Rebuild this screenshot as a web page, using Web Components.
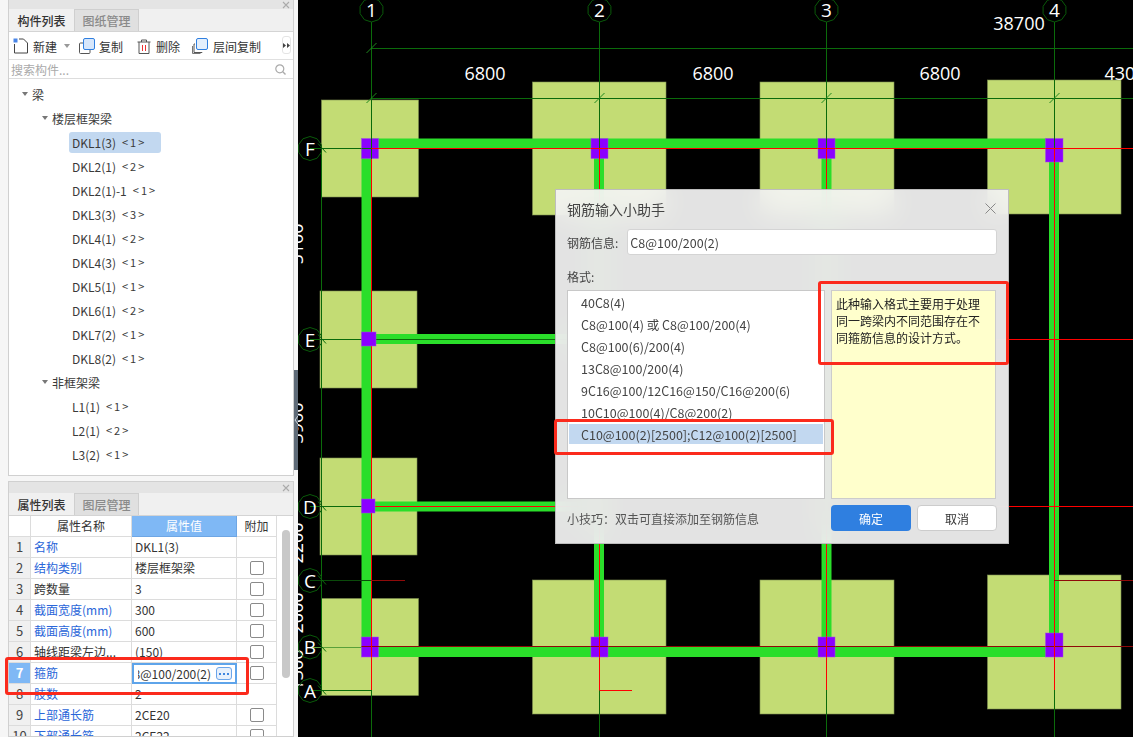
<!DOCTYPE html>
<html>
<head>
<meta charset="utf-8">
<style>
html, body { margin: 0; height: 737px; overflow: hidden; background: #000; }
body {
  display: flex;
  font: 12px "Noto Sans CJK SC", "Liberation Sans", sans-serif;
  color: #333;
}
</style>
</head>
<body>
<side-bar>
  <dock-panel style="height:476px" tab1="构件列表" tab2="图纸管理">
    <tool-bar></tool-bar>
    <search-box></search-box>
    <tree-view></tree-view>
  </dock-panel>
  <dock-panel style="height:256px" tab1="属性列表" tab2="图层管理" low>
    <prop-table></prop-table>
  </dock-panel>
  <mark-box style="left:5px;top:657px;width:244px;height:38px"></mark-box>
</side-bar>
<cad-view>
  <rebar-dialog></rebar-dialog>
</cad-view>

<script>
class MarkBox extends HTMLElement {
  constructor() {
    super();
    this.attachShadow({ mode: 'open' }).innerHTML = `<style>
      :host { display: block; position: absolute; box-sizing: border-box; border: 3px solid #fb2a1c; border-radius: 3px; pointer-events: none; }
    </style>`;
  }
}

class SideBar extends HTMLElement {
  constructor() {
    super();
    this.attachShadow({ mode: 'open' }).innerHTML = `<style>
      :host { display: flex; flex-direction: column; gap: 5px; position: relative; box-sizing: border-box; width: 298px; height: 737px; flex: none;
        padding: 0 4px 0 8px; background: #f6f6f6; }
      .bar { position: absolute; right: 0; top: 370px; width: 4px; height: 100px; background: #5f6b78; display: flex; align-items: center; }
    </style><slot></slot><div class="bar"><svg width="4" height="8" viewBox="0 0 4 8"><path d="M4 0L1 4l3 4" fill="none" stroke="#cfd5db"/></svg></div>`;
  }
}

class DockPanel extends HTMLElement {
  constructor() {
    super();
    const low = this.hasAttribute('low');
    this.attachShadow({ mode: 'open' }).innerHTML = `<style>
      :host { display: flex; flex-direction: column; box-sizing: border-box; flex: none; border: solid #d0d0d0; border-width: 0 1px 1px; background: #fff; overflow: hidden; }
      .head { box-sizing: border-box; height: ${low ? 12 : 9}px; background: #e4e4e4; display: flex; justify-content: flex-end; align-items: center; padding-right: 3px; flex: none; ${low ? 'border-top: 1px solid #d0d0d0;' : ''} }
      .tabs { box-sizing: border-box; height: 23px; background: #f0f0f0; display: flex; flex: none; border-bottom: 1px solid #d4d4d4; }
      .tab { box-sizing: border-box; width: 65px; display: flex; align-items: center; justify-content: center; font-weight: 500; color: #333; }
      .tab.off { background: #e0e0e0; color: #8a8a8a; border: 1px solid #cfcfcf; border-bottom: 0; }
      svg { display: block; }
    </style>
    <div class="head"><svg width="8" height="8" viewBox="0 0 8 8"><path d="M1 1l6 6M7 1L1 7" stroke="#aaa" stroke-width="1.1"/></svg></div>
    <div class="tabs"><div class="tab">${this.getAttribute('tab1')}</div><div class="tab off">${this.getAttribute('tab2')}</div></div>
    <slot></slot>`;
  }
}

class ToolBar extends HTMLElement {
  constructor() {
    super();
    this.attachShadow({ mode: 'open' }).innerHTML = `<style>
      :host { display: flex; align-items: center; box-sizing: border-box; height: 28px; flex: none; border-bottom: 1px solid #e0e0e0; padding: 1px 0 0 4px; position: relative; }
      .t { white-space: nowrap; color: #333; }
      svg { display: block; flex: none; }
      .more { position: absolute; right: 2px; top: 4px; width: 9px; height: 18px; border: 1px solid #e4e4e4; border-radius: 3px; display: flex; align-items: center; justify-content: center; box-sizing: border-box; }
    </style>
    <svg width="16" height="16" viewBox="0 0 16 16" style="margin-right:4px"><rect x="0.5" y="0.5" width="4" height="4" fill="#4a86e8"/><path d="M1.5 6v9h13V5l-4-4H6" fill="none" stroke="#444"/></svg>
    <span class="t">新建</span>
    <svg width="6" height="4" viewBox="0 0 6 4" style="margin:0 9px 0 7px"><path d="M0 0h6L3 4z" fill="#999"/></svg>
    <svg width="16" height="16" viewBox="0 0 16 16" style="margin-right:4px"><path d="M4 5H1.5a1 1 0 0 0-1 1v8.5a1 1 0 0 0 1 1H10a1 1 0 0 0 1-1V12" fill="none" stroke="#555"/><rect x="4.5" y="0.5" width="11" height="11" rx="1.5" fill="#d6e6fb" stroke="#2f7fe0"/></svg>
    <span class="t">复制</span>
    <svg width="14" height="15" viewBox="0 0 14 15" style="margin:0 5px 0 14px"><path d="M.5 3h13M4.5 3V1h5v2M2 3v11.500h10V3" fill="none" stroke="#555"/><path d="M5.5 6v6M8.5 6v6" stroke="#e33"/></svg>
    <span class="t">删除</span>
    <svg width="16" height="16" viewBox="0 0 16 16" style="margin:0 5px 0 12px"><path d="M3 6H2v8.5h8V14" fill="none" stroke="#555"/><path d="M.5 8v7.5h8" fill="none" stroke="#777"/><rect x="4.5" y="0.5" width="11" height="11" rx="1.5" fill="#e4effc" stroke="#2f7fe0"/></svg>
    <span class="t">层间复制</span>
    <div class="more"><svg width="7" height="5" viewBox="0 0 7 5"><path d="M0 0l3 2.5L0 5zM4 0l3 2.5L4 5z" fill="#444"/></svg></div>`;
  }
}

class SearchBox extends HTMLElement {
  constructor() {
    super();
    this.attachShadow({ mode: 'open' }).innerHTML = `<style>
      :host { display: flex; align-items: center; justify-content: space-between; box-sizing: border-box; height: 19px; flex: none; padding: 0 7px 0 2px; border-bottom: 1px solid #ddd; color: #aaa; }
    </style>
    <span>搜索构件...</span>
    <svg width="11" height="11" viewBox="0 0 11 11"><circle cx="4.8" cy="4.8" r="4" fill="none" stroke="#aaa" stroke-width="1.2"/><path d="M7.8 7.8L10.500 10.500" stroke="#aaa" stroke-width="1.4"/></svg>`;
  }
}

class TreeNode extends HTMLElement {
  constructor() {
    super();
    const level = Number(this.getAttribute('level'));
    const pads = [13, 33, 60];
    const open = this.hasAttribute('open');
    const sel = this.hasAttribute('selected');
    this.attachShadow({ mode: 'open' }).innerHTML = `<style>
      :host { display: flex; align-items: center; height: 24px; padding-left: ${pads[level]}px; box-sizing: border-box; color: #3a3a3a; white-space: nowrap; }
      .tri { width: 6px; height: 4px; margin-right: 4px; flex: none; }
      .box { display: flex; align-items: center; height: 21px; padding: 0 ${open ? 0 : sel ? 15 : 3}px 0 ${open ? 0 : 3}px; border-radius: 3px; ${sel ? 'background:#c2d8f0;' : ''} }
      .lab { margin-left: 6px; font-size: 11px; letter-spacing: 2px; }
    </style>
    ${open ? '<svg class="tri" viewBox="0 0 6 4"><path d="M0 0h6L3 4z" fill="#777"/></svg>' : ''}
    <div class="box"><slot></slot>${this.hasAttribute('tag') ? `<span class="lab">&lt;${this.getAttribute('tag')}&gt;</span>` : ''}</div>`;
  }
}

class TreeView extends HTMLElement {
  constructor() {
    super();
    const row = (l, t, tag, extra = '') => `<tree-node level="${l}" ${tag ? `tag="${tag}"` : ''} ${extra}>${t}</tree-node>`;
    this.attachShadow({ mode: 'open' }).innerHTML = `<style>
      :host { display: block; flex: 1; padding-top: 3px; overflow: hidden; }
    </style>
    ${row(0, '梁', '', 'open')}
    ${row(1, '楼层框架梁', '', 'open')}
    ${row(2, 'DKL1(3)', '1', 'selected')}
    ${row(2, 'DKL2(1)', '2')}
    ${row(2, 'DKL2(1)-1', '1')}
    ${row(2, 'DKL3(3)', '3')}
    ${row(2, 'DKL4(1)', '2')}
    ${row(2, 'DKL4(3)', '1')}
    ${row(2, 'DKL5(1)', '1')}
    ${row(2, 'DKL6(1)', '2')}
    ${row(2, 'DKL7(2)', '1')}
    ${row(2, 'DKL8(2)', '1')}
    ${row(1, '非框架梁', '', 'open')}
    ${row(2, 'L1(1)', '1')}
    ${row(2, 'L2(1)', '2')}
    ${row(2, 'L3(2)', '1')}`;
  }
}

class PropTable extends HTMLElement {
  constructor() {
    super();
    const rows = [
      ['名称', 'DKL1(3)', 1, 0],
      ['结构类别', '楼层框架梁', 1, 1],
      ['跨数量', '3', 0, 1],
      ['截面宽度(mm)', '300', 1, 1],
      ['截面高度(mm)', '600', 1, 1],
      ['轴线距梁左边...', '(150)', 0, 1],
      ['箍筋', 'C8@100/200(2)', 1, 1],
      ['肢数', '2', 1, 0],
      ['上部通长筋', '2CE20', 1, 1],
      ['下部通长筋', '2CE22', 1, 1],
    ];
    const cells = rows.map((r, i) => {
      const on = i === 6;
      const val = on
        ? `<div class="c v edit"><span class="clip"><span>${r[1]}</span></span><span class="dots"><svg width="10" height="2" viewBox="0 0 10 2"><path d="M0 0h2v2H0zM4 0h2v2H4zM8 0h2v2H8z" fill="#3d86e0"/></svg></span></div>`
        : `<div class="c v">${r[1]}</div>`;
      return `<div class="c n ${on ? 'on' : ''}">${i + 1}</div>
        <div class="c k ${r[2] ? 'blue' : ''}">${r[0]}</div>
        ${val}
        <div class="c a">${r[3] ? '<i class="chk"></i>' : ''}</div>`;
    }).join('');
    this.attachShadow({ mode: 'open' }).innerHTML = `<style>
      :host { display: block; flex: 1; position: relative; overflow: hidden; }
      .g { display: grid; grid-template-columns: 22px 101px 105px 40px; grid-auto-rows: 21px; width: 268px; }
      .c { box-sizing: border-box; border: solid #dcdcdc; border-width: 0 1px 1px 0; display: flex; align-items: center; padding: 0 0 1px 3px; white-space: nowrap; overflow: hidden; }
      .h { justify-content: center; padding: 0 0 1px; }
      .h.hv { background: #7fb8f5; color: #fff; border-color: #6ea6e4; }
      .n { background: #f0f0f0; justify-content: center; padding: 0 0 1px; font-size: 13px; color: #444; }
      .n.on { background: #7fb8f5; color: #fff; font-weight: 700; }
      .blue { color: #2a66d9; }
      .a { justify-content: center; padding: 0 0 0 1px; }
      .chk { display: block; width: 14px; height: 14px; box-sizing: border-box; border: 1px solid #8a8a8a; border-radius: 2px; background: #fff; }
      .edit { border: 2px solid #5ea4ea; padding: 0 0 0 4px; gap: 5px; }
      .clip { display: flex; justify-content: flex-end; width: 73px; overflow: hidden; flex: none; }
      .clip span { flex: none; }
      .dots { width: 16px; height: 13px; box-sizing: border-box; border: 1px solid #6aa5ea; border-radius: 3px; background: #e6f0fc; display: flex; align-items: center; justify-content: center; flex: none; }
      .thumb { position: absolute; left: 273px; top: 14px; width: 8px; height: 148px; border-radius: 4px; background: #c8c8c8; }
    </style>
    <div class="g">
      <div class="c h"></div><div class="c h">属性名称</div><div class="c h hv">属性值</div><div class="c h">附加</div>
      ${cells}
    </div>
    <div class="thumb"></div>`;
  }
}

class CadView extends HTMLElement {
  constructor() {
    super();
    // drawing coordinates are the page pixels minus the 298px sidebar
    const X = v => v - 298;
    const rect = (x1, y1, x2, y2, c, s = '') => `<rect x="${X(x1)}" y="${y1}" width="${x2 - x1}" height="${y2 - y1}" fill="${c}" ${s}/>`;
    const line = (x1, y1, x2, y2, c) => `<path d="M${X(x1)} ${y1}L${X(x2)} ${y2}" stroke="${c}" fill="none"/>`;
    const foot = (x1, y1, x2, y2) => rect(x1, y1, x2, y2, '#c3dc74', 'stroke="#7d9050" stroke-width="0.6"');
    const col = (x1, y1, x2, y2) => rect(x1, y1, x2, y2, '#8b00ff', 'stroke="#a050e0" stroke-width="0.5"');
    const GRN = '#0b6b0b', RED = '#ff0000', DRED = '#8f0a0a';
    const txt = (x, y, t, size = 18) => `<text x="${X(x)}" y="${y}" fill="#fff" font-size="${size}" text-anchor="middle" dominant-baseline="central" font-family='"Open Sans", sans-serif'>${t}</text>`;
    const vtxt = (x, y, t) => `<text transform="translate(${X(x)} ${y}) rotate(-90)" fill="#fff" font-size="18" text-anchor="middle" dominant-baseline="central" font-family='"Open Sans", sans-serif'>${t}</text>`;
    const bubble = (cx, cy, t) => {
      let pts = [];
      for (let i = 0; i < 10; i++) {
        const a = (i + .5) * Math.PI / 5;
        pts.push((X(cx) + 12 * Math.cos(a)).toFixed(1) + ',' + (cy + 12 * Math.sin(a)).toFixed(1));
      }
      return `<polygon points="${pts.join(' ')}" fill="none" stroke="#0a5a0a"/>` + txt(cx, cy, t, 19);
    };
    const tick = (x, y) => line(x - 5, y + 5, x + 5, y - 5, '#1f8a1f');
    const rowTick = y => line(318, y - 5, 326, y + 4, GRN);
    const axes = [371.5, 599.5, 826.5, 1054.5];
    this.attachShadow({ mode: 'open' }).innerHTML = `<style>
      :host { display: block; position: relative; flex: 1; height: 737px; background: #000; overflow: hidden; }
      svg { display: block; }
    </style>
    <svg width="835" height="737">
      ${foot(321.5, 100, 418.5, 197)}
      ${foot(532.5, 82, 666, 215)}
      ${foot(760, 82, 894, 215)}
      ${foot(987.5, 80, 1121, 214)}
      ${foot(320, 291, 417, 388)}
      ${foot(320, 458, 417, 555)}
      ${foot(321.5, 598.5, 418.5, 695.5)}
      ${foot(532.5, 580, 666, 714)}
      ${foot(760, 580, 894, 714)}
      ${foot(987.5, 575, 1121, 709)}

      ${rect(361.5, 148, 371.5, 657, '#2ade2a')}
      ${rect(594, 148, 604, 657, '#2ade2a')}
      ${rect(821.5, 148, 831.5, 657, '#2ade2a')}
      ${rect(1049, 148, 1059, 657, '#2ade2a')}
      ${rect(371, 138.5, 1054, 148.5, '#2ade2a')}
      ${rect(371, 647, 1054, 657, '#2ade2a')}
      ${rect(371, 334, 600, 344, '#2ade2a')}
      ${rect(371, 501.5, 600, 511.5, '#2ade2a')}

      ${line(371.5, 22, 371.5, 737, GRN)}
      ${line(599.5, 22, 599.5, 737, GRN)}
      ${line(826.5, 22, 826.5, 737, GRN)}
      ${line(1054.5, 22, 1054.5, 737, GRN)}
      ${line(321.5, 148, 321.5, 690, GRN)}
      ${line(371, 48.5, 1133, 48.5, GRN)}
      ${line(371, 98.5, 1133, 98.5, GRN)}
      ${line(310, 148.5, 371, 148.5, GRN)}
      ${line(310, 339.5, 600, 339.5, GRN)}
      ${line(310, 506.5, 371, 506.5, GRN)}
      ${line(310, 580.5, 371, 580.5, '#0a4a0a')}
      ${line(310, 647.5, 371, 647.5, '#5aa03a')}
      ${line(310, 690.5, 371, 690.5, GRN)}
      ${tick(371.5, 48)}${tick(371.5, 98)}${tick(599.5, 98)}${tick(826.5, 98)}${tick(1054.5, 98)}
      ${rowTick(148.5)}${rowTick(339.5)}${rowTick(506.5)}${rowTick(580.5)}${rowTick(647.5)}${rowTick(690.5)}

      ${line(371.5, 148, 371.5, 690, RED)}
      ${line(599.5, 148, 599.5, 690, RED)}
      ${line(826.5, 148, 826.5, 690, RED)}
      ${line(1054.5, 148, 1054.5, 690, RED)}
      ${line(371, 148.5, 1133, 148.5, RED)}
      ${line(600, 339.5, 1133, 339.5, RED)}
      ${line(371, 506.5, 1133, 506.5, RED)}
      ${line(371, 580.5, 405, 580.5, DRED)}
      ${line(1054, 580.5, 1133, 580.5, DRED)}
      ${line(371, 646.5, 1133, 646.5, DRED)}
      ${line(599.5, 690.5, 632, 690.5, RED)}

      ${col(361.5, 138.5, 378.5, 158.5)}
      ${col(591, 138.5, 608, 158.5)}
      ${col(818, 138.5, 835, 158.5)}
      ${col(1045.5, 138.5, 1063, 162)}
      ${col(361.5, 332, 376, 346)}
      ${col(361.5, 499, 375, 513)}
      ${col(361.5, 637, 378.5, 657)}
      ${col(591, 637, 608, 657)}
      ${col(818, 637, 835, 657)}
      ${col(1045.5, 633, 1063, 657)}
      ${line(371.5, 138, 371.5, 159, GRN)}${line(599.5, 138, 599.5, 148, GRN)}${line(826.5, 138, 826.5, 148, GRN)}${line(1054.5, 138, 1054.5, 148, GRN)}
      ${line(599.5, 148, 599.5, 159, RED)}${line(826.5, 148, 826.5, 159, RED)}${line(1054.5, 148, 1054.5, 162, RED)}
      ${line(361.5, 148.5, 371.5, 148.5, GRN)}${line(371.5, 148.5, 379, 148.5, RED)}${line(591, 148.5, 608, 148.5, RED)}${line(818, 148.5, 835, 148.5, RED)}${line(1045.5, 148.5, 1063, 148.5, RED)}
      ${line(361.5, 646.5, 379, 646.5, DRED)}${line(591, 646.5, 608, 646.5, DRED)}${line(818, 646.5, 835, 646.5, DRED)}${line(1045.5, 646.5, 1063, 646.5, DRED)}
      ${line(371.5, 637, 371.5, 657, RED)}${line(599.5, 637, 599.5, 657, RED)}${line(826.5, 637, 826.5, 657, RED)}${line(1054.5, 633, 1054.5, 657, RED)}

      ${txt(485, 73, '6800')}${txt(713, 73, '6800')}${txt(940, 73, '6800')}${txt(1125, 73, '4300')}
      ${txt(1019, 23, '38700')}
      ${vtxt(296, 244, '5100')}${vtxt(296, 423, '3900')}${vtxt(296, 543, '2200')}${vtxt(296, 613, '2000')}${vtxt(296, 670, '1300')}

      ${axes.map((x, i) => bubble(x, 10, i + 1)).join('')}
      ${[['F', 148.5], ['E', 339.5], ['D', 506.5], ['C', 580.5], ['B', 647], ['A', 690.5]].map(r => bubble(310, r[1], r[0])).join('')}
    </svg>
    <slot></slot>`;
  }
}

class RebarDialog extends HTMLElement {
  constructor() {
    super();
    const items = ['40C8(4)', 'C8@100(4) 或 C8@100/200(4)', 'C8@100(6)/200(4)', '13C8@100/200(4)', '9C16@100/12C16@150/C16@200(6)', '10C10@100(4)/C8@200(2)', 'C10@100(2)[2500];C12@100(2)[2500]'];
    this.attachShadow({ mode: 'open' }).innerHTML = `<style>
      :host { display: flex; flex-direction: column; position: absolute; left: 257px; top: 189px; width: 454px; height: 355px; box-sizing: border-box; padding: 0 11px 11px;
        border: 1px solid #bdbdbd; background: rgba(244,244,244,.93); -webkit-backdrop-filter: blur(14px); backdrop-filter: blur(14px); color: #444; }
      .title { height: 37px; display: flex; align-items: center; justify-content: space-between; font-size: 14px; padding-right: 1px; flex: none; }
      .info { height: 26px; display: flex; align-items: center; gap: 9px; margin-top: 2px; flex: none; }
      .inp { box-sizing: border-box; flex: 1; height: 26px; background: #fff; border: 1px solid #d4d4d4; border-radius: 3px; padding-left: 2px; display: flex; align-items: center; font-size: 12.5px; color: #444; }
      .fmt { margin: 13px 0 4px; height: 18px; line-height: 18px; flex: none; }
      .panes { display: grid; grid-template-columns: 258px 165px; gap: 6px; height: 209px; flex: none; }
      .list { box-sizing: border-box; background: #fff; border: 1px solid #c8c8c8; }
      .it { height: 22px; display: flex; align-items: center; padding-left: 13px; font-size: 12.5px; white-space: nowrap; color: #444; }
      .it.sel { background: #c2d8f0; height: 20px; margin: 1px; padding-left: 12px; }
      .note { box-sizing: border-box; background: #ffffcc; border: 1px solid #ccc; padding: 4px 0 0 4px; line-height: 17px; color: #222; }
      .foot { display: flex; align-items: center; margin-top: 6px; height: 26px; flex: none; }
      .tip { flex: 1; color: #555; }
      .btn { box-sizing: border-box; width: 80px; height: 26px; border-radius: 4px; display: flex; align-items: center; justify-content: center; margin-left: 6px; }
      .ok { background: #2f7fe0; color: #fff; }
      .no { background: #fff; border: 1px solid #ccc; color: #333; }
    </style>
    <div class="title"><span>钢筋输入小助手</span><svg width="11" height="11" viewBox="0 0 11 11"><path d="M.5.5l10 10M10.500.5l-10 10" stroke="#888"/></svg></div>
    <div class="info"><span>钢筋信息:</span><div class="inp">C8@100/200(2)</div></div>
    <div class="fmt">格式:</div>
    <div class="panes">
      <div class="list">${items.map((t, i) => `<div class="it ${i === 6 ? 'sel' : ''}">${t}</div>`).join('')}</div>
      <div class="note">此种输入格式主要用于处理<br>同一跨梁内不同范围存在不<br>同箍筋信息的设计方式。</div>
    </div>
    <div class="foot"><span class="tip">小技巧&#xFF1A;双击可直接添加至钢筋信息</span><div class="btn ok">确定</div><div class="btn no">取消</div></div>
    <mark-box style="left:262px;top:91px;width:191px;height:84px"></mark-box>
    <mark-box style="left:-2px;top:229px;width:280px;height:36px"></mark-box>`;
  }
}

customElements.define('mark-box', MarkBox);
customElements.define('side-bar', SideBar);
customElements.define('dock-panel', DockPanel);
customElements.define('tool-bar', ToolBar);
customElements.define('search-box', SearchBox);
customElements.define('tree-node', TreeNode);
customElements.define('tree-view', TreeView);
customElements.define('prop-table', PropTable);
customElements.define('cad-view', CadView);
customElements.define('rebar-dialog', RebarDialog);
</script>
</body>
</html>
